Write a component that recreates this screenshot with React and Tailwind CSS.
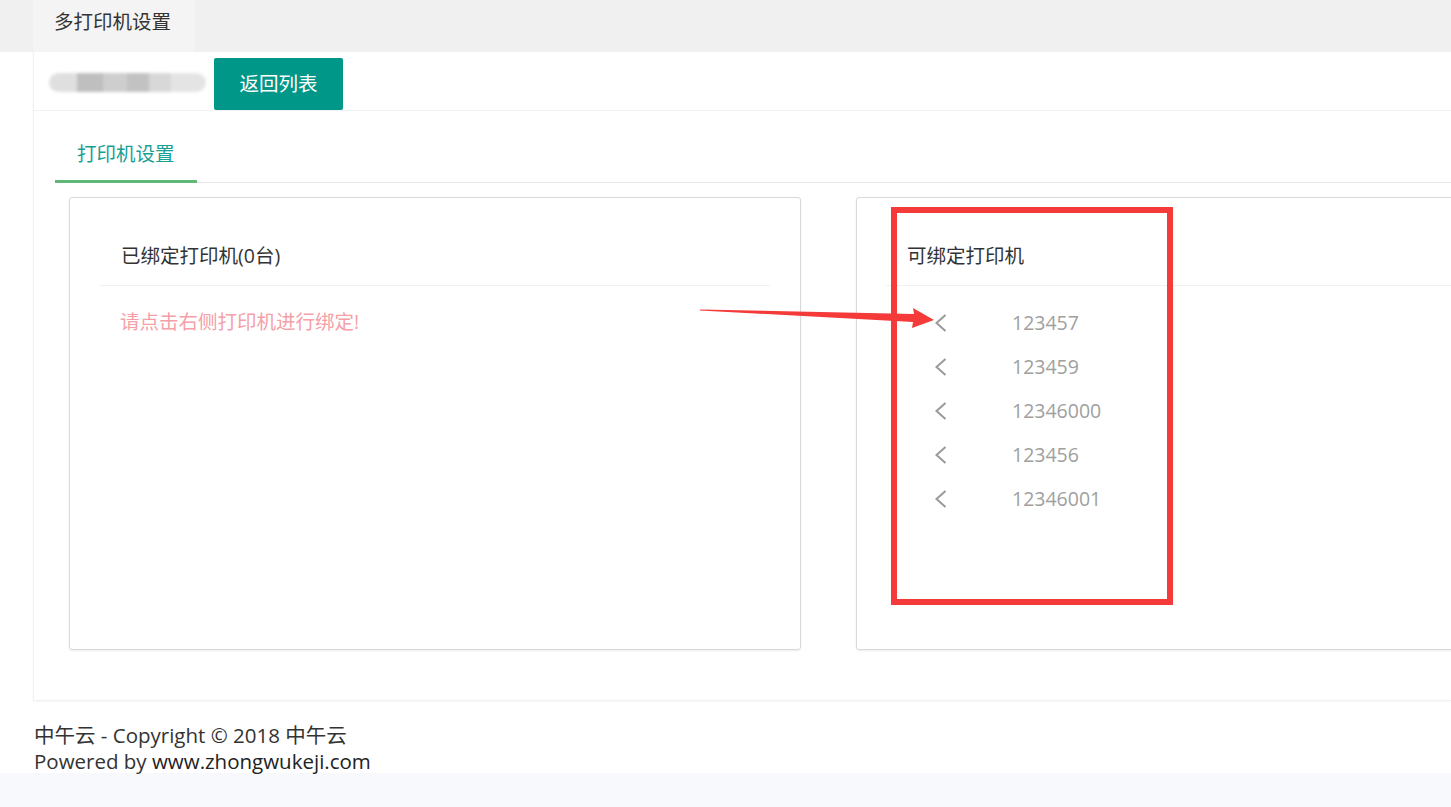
import React from 'react';

const printers = ['123457', '123459', '12346000', '123456', '12346001'];

function Chevron() {
  return (
    <svg width="16" height="20" viewBox="0 0 16 20" className="shrink-0">
      <polyline points="12.5,2 3.5,10 12.5,18" fill="none" stroke="#9a9a9a" strokeWidth="2" />
    </svg>
  );
}

function CardHeader({ title, pad }) {
  return (
    <div className={`h-[88px] border-b border-[#f0f0f0] flex items-end pb-[15px] ${pad}`}>
      <span className="text-[19.5px] leading-[28px] text-[#333]">{title}</span>
    </div>
  );
}

export default function App() {
  return (
    <div
      className="relative w-full h-[807px] overflow-hidden bg-white"
      style={{ fontFamily: '"Open Sans", "Noto Sans CJK SC", sans-serif' }}
    >
      {/* top tab bar */}
      <div className="h-[52px] bg-[#eff0ef] flex pl-[33px]">
        <div className="w-[162px] h-full bg-[#f4f4f4] flex items-center pb-[8px] pl-[21px] text-[19.5px] text-[#333]">
          多打印机设置
        </div>
      </div>

      {/* main panel */}
      <div className="ml-[33px] h-[649px] border-l border-b border-[#f0f0f0] shadow-[0_1px_2px_rgba(0,0,0,0.04)]">
        <div className="h-[59px] pt-[6px] flex items-start border-b border-[#f3f3f3]">
          <div className="ml-[15px] mt-[15px] w-[157px] h-[19px] flex blur-[1.5px] opacity-90">
            <div className="w-[28px] h-full rounded-l-full bg-[#dcdcdc]" />
            <div className="w-[26px] h-full bg-[#b9b9b9]" />
            <div className="w-[24px] h-full bg-[#c9c9c9]" />
            <div className="w-[22px] h-full bg-[#bcbcbc]" />
            <div className="w-[22px] h-full bg-[#d4d4d4]" />
            <div className="w-[35px] h-full rounded-r-full bg-[#e2e2e2]" />
          </div>
          <button className="ml-[8px] w-[129px] h-[52px] bg-[#009688] text-white text-[19.5px] rounded-[2px]">
            返回列表
          </button>
        </div>

        {/* tabs */}
        <div className="ml-[21px] h-[72px] border-b border-[#e6e6e6] flex">
          <div className="relative w-[142px] h-full flex items-end pb-[14px] pl-[22px]">
            <span className="text-[19.5px] leading-[28px] text-[#17a096]">打印机设置</span>
            <span className="absolute left-0 right-0 bottom-[-1px] h-[3px] bg-[#5fb878]" />
          </div>
        </div>

        {/* cards */}
        <div className="flex gap-[55px] mt-[14px] ml-[35px]">
          <div className="w-[732px] h-[453px] shrink-0 border border-[#d9d9d9] rounded-[3px] shadow-[0_1px_2px_rgba(0,0,0,0.08)] px-[30px]">
            <CardHeader title="已绑定打印机(0台)" pad="pl-[21px]" />
            <div className="pt-[22px] pl-[20px] text-[19.5px] leading-[28px] text-[#f5a0a8]">
              请点击右侧打印机进行绑定!
            </div>
          </div>

          <div className="w-[732px] h-[453px] shrink-0 border border-[#d9d9d9] rounded-[3px] shadow-[0_1px_2px_rgba(0,0,0,0.08)] px-[29px]">
            <CardHeader title="可绑定打印机" pad="pl-[21px]" />
            <div className="pt-[15px] flex flex-col">
              {printers.map(p => (
                <div key={p} className="h-[44px] flex items-center pl-[47px]">
                  <Chevron />
                  <span className="ml-[63px] text-[19.5px] text-[#a0a0a0]">{p}</span>
                </div>
              ))}
            </div>
          </div>
        </div>
      </div>

      {/* footer */}
      <div className="pl-[34px] pt-[21px] h-[72px] text-[20.5px] leading-[26px] text-[#333]">
        <div>中午云 - Copyright © 2018 中午云</div>
        <div>
          Powered by <span className="text-[#222]">www.zhongwukeji.com</span>
        </div>
      </div>
      <div className="h-[40px] bg-[#f7f9fc]" />

      {/* annotation overlay */}
      <div className="absolute left-[891px] top-[207px] w-[282px] h-[398px] border-[6px] border-[#f53a3a]" />
      <svg className="absolute left-0 top-0 pointer-events-none" width="1451" height="807">
        <polygon points="700,309.5 914,314 913,308 934,320 912,328 913,322 700,310.5" fill="#f53a3a" />
      </svg>
    </div>
  );
}
